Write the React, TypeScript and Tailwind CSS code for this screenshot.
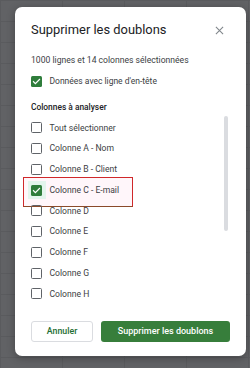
import React from "react";

const font = { fontFamily: "Roboto, 'Noto Sans', Arial, sans-serif" };

function Box({ checked, halo }: { checked?: boolean; halo?: boolean }) {
  return (
    <div className={"flex h-[18px] w-[18px] items-center justify-center " + (halo ? "bg-[#e3f5ec]" : "")}>
      {checked ? (
        <div className="flex h-[11px] w-[11px] items-center justify-center rounded-[1.5px] bg-[#2f7d3b]">
          <svg width="9" height="9" viewBox="0 0 24 24">
            <path d="M4 12.5l5 5L20 6.5" fill="none" stroke="white" strokeWidth="3.2" strokeLinecap="square" />
          </svg>
        </div>
      ) : (
        <div className="h-[11px] w-[11px] rounded-[1.5px] border-[1.5px] border-[#5f6368]" />
      )}
    </div>
  );
}

const rows = [
  "Tout sélectionner",
  "Colonne A - Nom",
  "Colonne B - Client",
  "Colonne C - E-mail",
  "Colonne D",
  "Colonne E",
  "Colonne F",
  "Colonne G",
  "Colonne H",
];

export default function App() {
  return (
    <div
      className="relative h-[368px] w-[250px] overflow-hidden bg-[#616265] bg-[linear-gradient(#5a5b5e_1px,transparent_1px),linear-gradient(90deg,#5a5b5e_1px,transparent_1px)] bg-[size:62px_21px] pt-[7px] pl-[15px]"
      style={font}
    >
      <div className="relative flex h-[349px] w-[231px] flex-col rounded-[7px] bg-white px-[16px] shadow-[0_2px_8px_rgba(0,0,0,0.3)]">
        <div className="mt-[13px] flex h-[20px] items-center justify-between">
          <span className="text-[12.9px] leading-[20px] text-[#202124]">Supprimer les doublons</span>
          <svg width="9" height="9" viewBox="0 0 10 10" className="mr-[6px]">
            <path d="M1 1L9 9M9 1L1 9" stroke="#80868b" strokeWidth="1.2" />
          </svg>
        </div>
        <div className="mt-[14px] h-[12px] text-[8.6px] leading-[12px] text-[#3c4043]">
          1000 lignes et 14 colonnes sélectionnées
        </div>
        <div className="mt-[6px] flex h-[18px] items-center">
          <div className="-ml-[3.5px]">
            <Box checked />
          </div>
          <span className="ml-[4px] text-[8.5px] text-[#3c4043]">Données avec ligne d'en-tête</span>
        </div>
        <div className="mt-[11px] h-[12px] text-[8.4px] font-medium leading-[12px] text-[#202124]">
          Colonnes à analyser
        </div>
        <div className="relative mt-[4.6px] flex flex-col">
          {rows.map((r, i) => (
            <div key={r} className="relative flex h-[20.75px] items-center">
              {i === 3 && (
                <div className="absolute -left-[8px] top-[-3px] h-[30px] w-[110px] border-[1.5px] border-[#d0282a] border-b-[#8a4a2a] bg-[#fff6fa]" />
              )}
              <div className="relative -ml-[3.5px]">
                <Box checked={i === 3} halo={i === 3} />
              </div>
              <span className="relative ml-[4px] text-[8.6px] text-[#3c4043]">{r}</span>
            </div>
          ))}
          <div className="absolute right-[2px] top-[-2px] h-[115px] w-[4px] rounded-full bg-[#dadce0]" />
        </div>
        <div className="mt-[16.6px] flex h-[21px] gap-[8px]">
          <div className="flex w-[62px] items-center justify-center rounded-[3px] border border-[#dadce0] text-[8.8px] font-medium text-[#1e6e34]">
            Annuler
          </div>
          <div className="flex w-[129px] items-center justify-center rounded-[3px] bg-[#377e3b] text-[9px] font-medium text-white">
            Supprimer les doublons
          </div>
        </div>
      </div>
    </div>
  );
}
